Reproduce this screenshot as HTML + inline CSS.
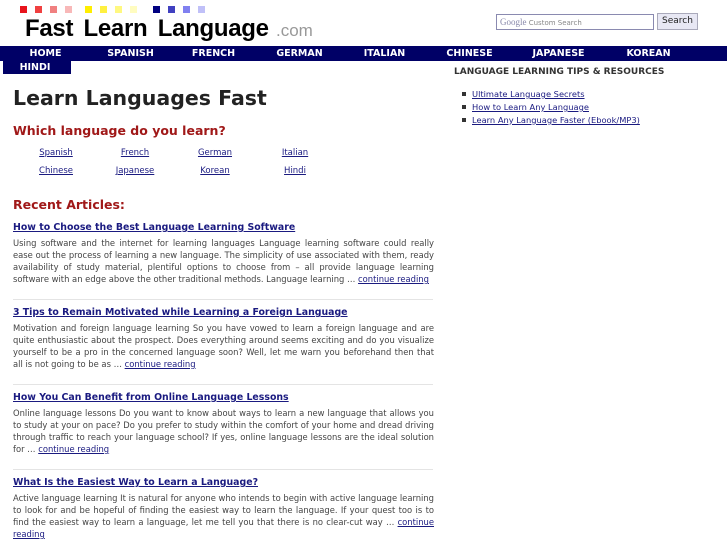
<!DOCTYPE html>
<html><head><style>
*{margin:0;padding:0;box-sizing:border-box}
body{width:727px;height:545px;overflow:hidden;background:#fff;font-family:"DejaVu Sans",sans-serif;position:relative;color:#444}
.a{position:absolute}
.sq{position:absolute;top:6px;width:7px;height:7px}
a{color:#1a1a80;text-decoration:underline}
.nav{left:0;top:46px;width:727px;height:15px;background:#000066}
.nav span,.hindi span{position:absolute;top:0;width:85px;text-align:center;color:#fff;font-weight:bold;font-size:9.5px;line-height:15px}
.hindi{left:3px;top:61px;width:68px;height:13px;background:#000066}
.txt{font-size:8.4px;line-height:12px;text-align:justify;color:#444;width:421px;left:13px}
.t{font-size:9.4px;font-weight:bold;left:13px}
.sep{left:13px;width:420px;height:1px;background:#e4e4e4}
.lg{font-size:8.5px;width:80px;text-align:center}
</style></head><body>
<div class="sq" style="left:20px;background:#e8141c"></div>
<div class="sq" style="left:35px;background:#f04040"></div>
<div class="sq" style="left:50px;background:#f08080"></div>
<div class="sq" style="left:65px;background:#f8b8b8"></div>
<div class="sq" style="left:85px;background:#ffee00"></div>
<div class="sq" style="left:100px;background:#fff040"></div>
<div class="sq" style="left:115px;background:#fff880"></div>
<div class="sq" style="left:130px;background:#fffcc0"></div>
<div class="sq" style="left:153px;background:#000080"></div>
<div class="sq" style="left:168px;background:#4040c0"></div>
<div class="sq" style="left:183px;background:#8080f0"></div>
<div class="sq" style="left:198px;background:#c0c0f8"></div>
<div class="a" style="left:25px;top:15px;font-family:'Liberation Sans',sans-serif;font-weight:bold;font-size:24px;color:#000;word-spacing:4px;letter-spacing:-0.3px;line-height:28px">Fast Learn Language</div>
<div class="a" style="left:276px;top:21px;font-family:'Liberation Sans',sans-serif;font-size:17px;color:#999;line-height:20px">.com</div>
<div class="a" style="left:496px;top:14px;width:158px;height:16px;border:1px solid #8a8ab0;font-size:7px;line-height:14px;padding-left:3px;color:#888"><span style="color:#88a;font-family:'Liberation Serif',serif;font-size:9px">Google</span> Custom Search</div>
<div class="a" style="left:657px;top:13px;width:41px;height:17px;border:1px solid #aab;background:#e8e8f4;font-size:9px;line-height:15px;text-align:center;color:#222">Search</div>
<div class="a nav">
<span style="left:3px">HOME</span><span style="left:88px">SPANISH</span><span style="left:171px">FRENCH</span><span style="left:257px">GERMAN</span><span style="left:342px">ITALIAN</span><span style="left:427px">CHINESE</span><span style="left:516px">JAPANESE</span><span style="left:606px">KOREAN</span>
</div>
<div class="a hindi"><span style="left:-3px;width:70px;line-height:13px">HINDI</span></div>
<div class="a" style="left:454px;top:66px;font-size:9px;font-weight:bold;color:#333;line-height:12px">LANGUAGE LEARNING TIPS &amp; RESOURCES</div>
<div class="a" style="left:462px;top:88px;font-size:8.3px;line-height:13px">
<div><span style="display:inline-block;width:4px;height:4px;background:#333;margin:0 6px 1px 0"></span><a>Ultimate Language Secrets</a></div>
<div><span style="display:inline-block;width:4px;height:4px;background:#333;margin:0 6px 1px 0"></span><a>How to Learn Any Language</a></div>
<div><span style="display:inline-block;width:4px;height:4px;background:#333;margin:0 6px 1px 0"></span><a>Learn Any Language Faster (Ebook/MP3)</a></div>
</div>
<div class="a" style="left:13px;top:85px;font-size:20.5px;font-weight:bold;color:#222;line-height:26px">Learn Languages Fast</div>
<div class="a" style="left:13px;top:123px;font-size:12.5px;font-weight:bold;color:#a01818;line-height:16px">Which language do you learn?</div>
<div class="a lg" style="left:16px;top:148px"><a>Spanish</a></div>
<div class="a lg" style="left:95px;top:148px"><a>French</a></div>
<div class="a lg" style="left:175px;top:148px"><a>German</a></div>
<div class="a lg" style="left:255px;top:148px"><a>Italian</a></div>
<div class="a lg" style="left:16px;top:166px"><a>Chinese</a></div>
<div class="a lg" style="left:95px;top:166px"><a>Japanese</a></div>
<div class="a lg" style="left:175px;top:166px"><a>Korean</a></div>
<div class="a lg" style="left:255px;top:166px"><a>Hindi</a></div>
<div class="a" style="left:13px;top:197px;font-size:12.5px;font-weight:bold;color:#a01818;line-height:16px">Recent Articles:</div>

<div class="a t" style="top:222px"><a>How to Choose the Best Language Learning Software</a></div>
<div class="a txt" style="top:237px">Using software and the internet for learning languages Language learning software could really ease out the process of learning a new language. The simplicity of use associated with them, ready availability of study material, plentiful options to choose from – all provide language learning software with an edge above the other traditional methods. Language learning … <a>continue reading</a></div>
<div class="a sep" style="top:299px"></div>
<div class="a t" style="top:307px"><a>3 Tips to Remain Motivated while Learning a Foreign Language</a></div>
<div class="a txt" style="top:322px">Motivation and foreign language learning So you have vowed to learn a foreign language and are quite enthusiastic about the prospect. Does everything around seems exciting and do you visualize yourself to be a pro in the concerned language soon? Well, let me warn you beforehand then that all is not going to be as … <a>continue reading</a></div>
<div class="a sep" style="top:384px"></div>
<div class="a t" style="top:392px"><a>How You Can Benefit from Online Language Lessons</a></div>
<div class="a txt" style="top:407px">Online language lessons Do you want to know about ways to learn a new language that allows you to study at your on pace? Do you prefer to study within the comfort of your home and dread driving through traffic to reach your language school? If yes, online language lessons are the ideal solution for … <a>continue reading</a></div>
<div class="a sep" style="top:469px"></div>
<div class="a t" style="top:477px"><a>What Is the Easiest Way to Learn a Language?</a></div>
<div class="a txt" style="top:492px">Active language learning It is natural for anyone who intends to begin with active language learning to look for and be hopeful of finding the easiest way to learn the language. If your quest too is to find the easiest way to learn a language, let me tell you that there is no clear-cut way … <a>continue reading</a></div>
</body></html>
